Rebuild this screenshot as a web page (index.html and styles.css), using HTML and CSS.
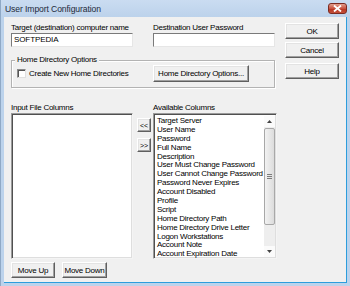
FILE: index.html
```html
<!DOCTYPE html>
<html>
<head>
<meta charset="utf-8">
<link rel="stylesheet" href="styles.css">
</head>
<body>
<div class="window">
  <div class="titlebar">
    <span class="title">User Import Configuration</span>
    <span class="close"><svg width="9" height="7" viewBox="0 0 9 7"><path d="M1 0.5 L8 6.5 M8 0.5 L1 6.5" stroke="#fff" stroke-width="1.8"/></svg></span>
  </div>
  <div class="client">
    <div class="main">
      <div class="fields">
        <div class="field">
          <div class="label">Target (destination) computer name</div>
          <div class="input">SOFTPEDIA</div>
        </div>
        <div class="field">
          <div class="label">Destination User Password</div>
          <div class="input"></div>
        </div>
      </div>
      <div class="group">
        <span class="legend">Home Directory Options</span>
        <div class="check-wrap">
          <span class="checkbox"></span>
          <span class="check-label">Create New Home Directories</span>
        </div>
        <div class="btn btn-home">Home Directory Options...</div>
      </div>
      <div class="lists">
        <div class="col col-input">
          <div class="label">Input File Columns</div>
          <div class="listbox listbox-input"></div>
        </div>
        <div class="arrows">
          <div class="btn btn-arrow">&lt;&lt;</div>
          <div class="btn btn-arrow">&gt;&gt;</div>
        </div>
        <div class="col col-avail">
          <div class="label">Available Columns</div>
          <div class="listbox listbox-avail">
            <div class="items">
              <div class="item">Target Server</div>
              <div class="item">User Name</div>
              <div class="item">Password</div>
              <div class="item">Full Name</div>
              <div class="item">Description</div>
              <div class="item">User Must Change Password</div>
              <div class="item">User Cannot Change Password</div>
              <div class="item">Password Never Expires</div>
              <div class="item">Account Disabled</div>
              <div class="item">Profile</div>
              <div class="item">Script</div>
              <div class="item">Home Directory Path</div>
              <div class="item">Home Directory Drive Letter</div>
              <div class="item">Logon Workstations</div>
              <div class="item">Account Note</div>
              <div class="item">Account Expiration Date</div>
            </div>
            <div class="scrollbar">
              <div class="sb-arrow"><svg width="5" height="3" viewBox="0 0 5 3"><path d="M0 3 L2.5 0 L5 3 Z" fill="#444"/></svg></div>
              <div class="sb-track">
                <div class="sb-thumb"><span class="grip"></span></div>
              </div>
              <div class="sb-arrow"><svg width="5" height="3" viewBox="0 0 5 3"><path d="M0 0 L2.5 3 L5 0 Z" fill="#444"/></svg></div>
            </div>
          </div>
        </div>
      </div>
      <div class="bottom">
        <div class="btn btn-up">Move Up</div>
        <div class="btn btn-down">Move Down</div>
      </div>
    </div>
    <div class="side">
      <div class="btn btn-side btn-ok">OK</div>
      <div class="btn btn-side btn-cancel">Cancel</div>
      <div class="btn btn-side btn-help">Help</div>
    </div>
  </div>
</div>
</body>
</html>
```
FILE: styles.css
```css
* { box-sizing: border-box; }
html, body { margin: 0; padding: 0; }
body {
  width: 350px;
  height: 286px;
  overflow: hidden;
  font-family: "Liberation Sans", Arial, sans-serif;
  font-size: 8px;
  color: #000;
}
.window {
  width: 350px;
  height: 286px;
  background: #bcd3ec;
  display: flex;
  flex-direction: column;
  border-left: 1px solid #8fa9c6;
}
.titlebar {
  height: 17px;
  position: relative;
  display: flex;
  align-items: center;
  padding-left: 4px;
  background: linear-gradient(#cadcf1, #bcd2eb);
}
.title {
  font-size: 8.6px;
  color: #1e2a3a;
  letter-spacing: -0.1px;
}
.close {
  position: absolute;
  left: 327px;
  top: 3px;
  width: 19px;
  height: 11px;
  border: 1px solid #7b2b22;
  border-radius: 3px;
  background: linear-gradient(#e3a08f, #c8523f 50%, #b7331f 51%, #c4503b);
  display: flex;
  align-items: center;
  justify-content: center;
}
.close svg { display: block; }
.client {
  margin-left: 3px;
  width: 343px;
  height: 266px;
  background: #f0f0f0;
  display: flex;
  padding: 5px 0 0 7px;
  border-bottom: 1px solid #2c9ddc;
  border-right: 1px solid #2c9ddc;
}
.main {
  width: 266px;
  display: flex;
  flex-direction: column;
}
.label {
  height: 11px;
  line-height: 11px;
  letter-spacing: -0.25px;
  white-space: nowrap;
}
.fields {
  display: flex;
  gap: 20px;
}
.field { width: 122px; }
.input {
  height: 14px;
  background: #fff;
  border: 1px solid;
  border-color: #7a7a7a #e6e6e6 #e6e6e6 #7a7a7a;
  padding: 0 2px;
  line-height: 12px;
  letter-spacing: -0.1px;
}
.group {
  position: relative;
  margin-top: 13px;
  width: 264px;
  height: 28px;
  border: 1px solid #b3b3b3;
  box-shadow: inset 1px 1px 0 #fff, 1px 1px 0 #fff;
  display: flex;
  align-items: center;
  padding-bottom: 1px;
}
.legend {
  position: absolute;
  left: 3px;
  top: -7px;
  background: #f0f0f0;
  padding: 0 2px;
  line-height: 11px;
  letter-spacing: -0.25px;
}
.check-wrap {
  width: 141px;
  display: flex;
  align-items: center;
  padding-left: 5px;
}
.checkbox {
  width: 9px;
  height: 9px;
  background: #fff;
  border: 1px solid;
  border-color: #8a8a8a #e0e0e0 #e0e0e0 #8a8a8a;
  box-shadow: inset 1px 1px 0 #555;
  margin-right: 3px;
}
.check-label { letter-spacing: -0.25px; white-space: nowrap; }
.btn {
  background: #f0f0f0;
  border: 1px solid;
  border-color: #fff #5f5f5f #5f5f5f #fff;
  box-shadow: inset -1px -1px 0 #a0a0a0, inset 1px 1px 0 #e3e3e3;
  display: flex;
  align-items: center;
  justify-content: center;
  letter-spacing: -0.25px;
  white-space: nowrap;
}
.btn-home {
  width: 96px;
  height: 17px;
}
.lists {
  display: flex;
  margin-top: 14px;
}
.col-input { width: 122px; }
.col-avail { width: 124px; margin-left: 2px; }
.listbox {
  height: 146px;
  background: #fff;
  border: 1px solid;
  border-color: #9a9a9a #f4f4f4 #f4f4f4 #9a9a9a;
  box-shadow: inset 1px 1px 0 #505050, inset -1px -1px 0 #dedede;
}
.listbox-avail {
  display: flex;
  overflow: hidden;
  padding: 2px 1px 1px 2px;
}
.items {
  flex: 1;
  padding-left: 1px;
}
.item {
  height: 8.9px;
  line-height: 9px;
  letter-spacing: -0.25px;
  white-space: nowrap;
}
.arrows {
  width: 14px;
  margin-left: 4px;
  padding-top: 16px;
  display: flex;
  flex-direction: column;
  gap: 6px;
}
.btn-arrow {
  height: 14px;
  font-size: 7px;
  letter-spacing: 0;
}
.scrollbar {
  width: 11px;
  display: flex;
  flex-direction: column;
  background: #f3f3f3;
}
.sb-arrow {
  height: 11px;
  display: flex;
  align-items: center;
  justify-content: center;
  background: #fbfbfb;
}
.sb-arrow svg { display: block; }
.sb-track {
  flex: 1;
  padding-top: 1px;
  background: #eeeeee;
}
.sb-thumb {
  height: 97px;
  border: 1px solid #a8a8a8;
  border-radius: 2px;
  background: linear-gradient(90deg, #f2f2f2, #dcdcdc);
  display: flex;
  align-items: center;
  justify-content: center;
}
.grip {
  width: 5px;
  height: 5px;
  background: repeating-linear-gradient(#7c7c7c 0 1px, transparent 1px 2px);
}
.bottom {
  display: flex;
  gap: 7px;
  margin-top: 3px;
}
.btn-up { width: 44px; height: 16px; }
.btn-down { width: 45px; height: 16px; }
.side {
  margin-left: 8px;
  width: 55px;
  display: flex;
  flex-direction: column;
  padding-top: 1px;
}
.btn-side { height: 16px; width: 54px; }
.btn-cancel { margin-top: 3px; }
.btn-help { margin-top: 5px; }
```
